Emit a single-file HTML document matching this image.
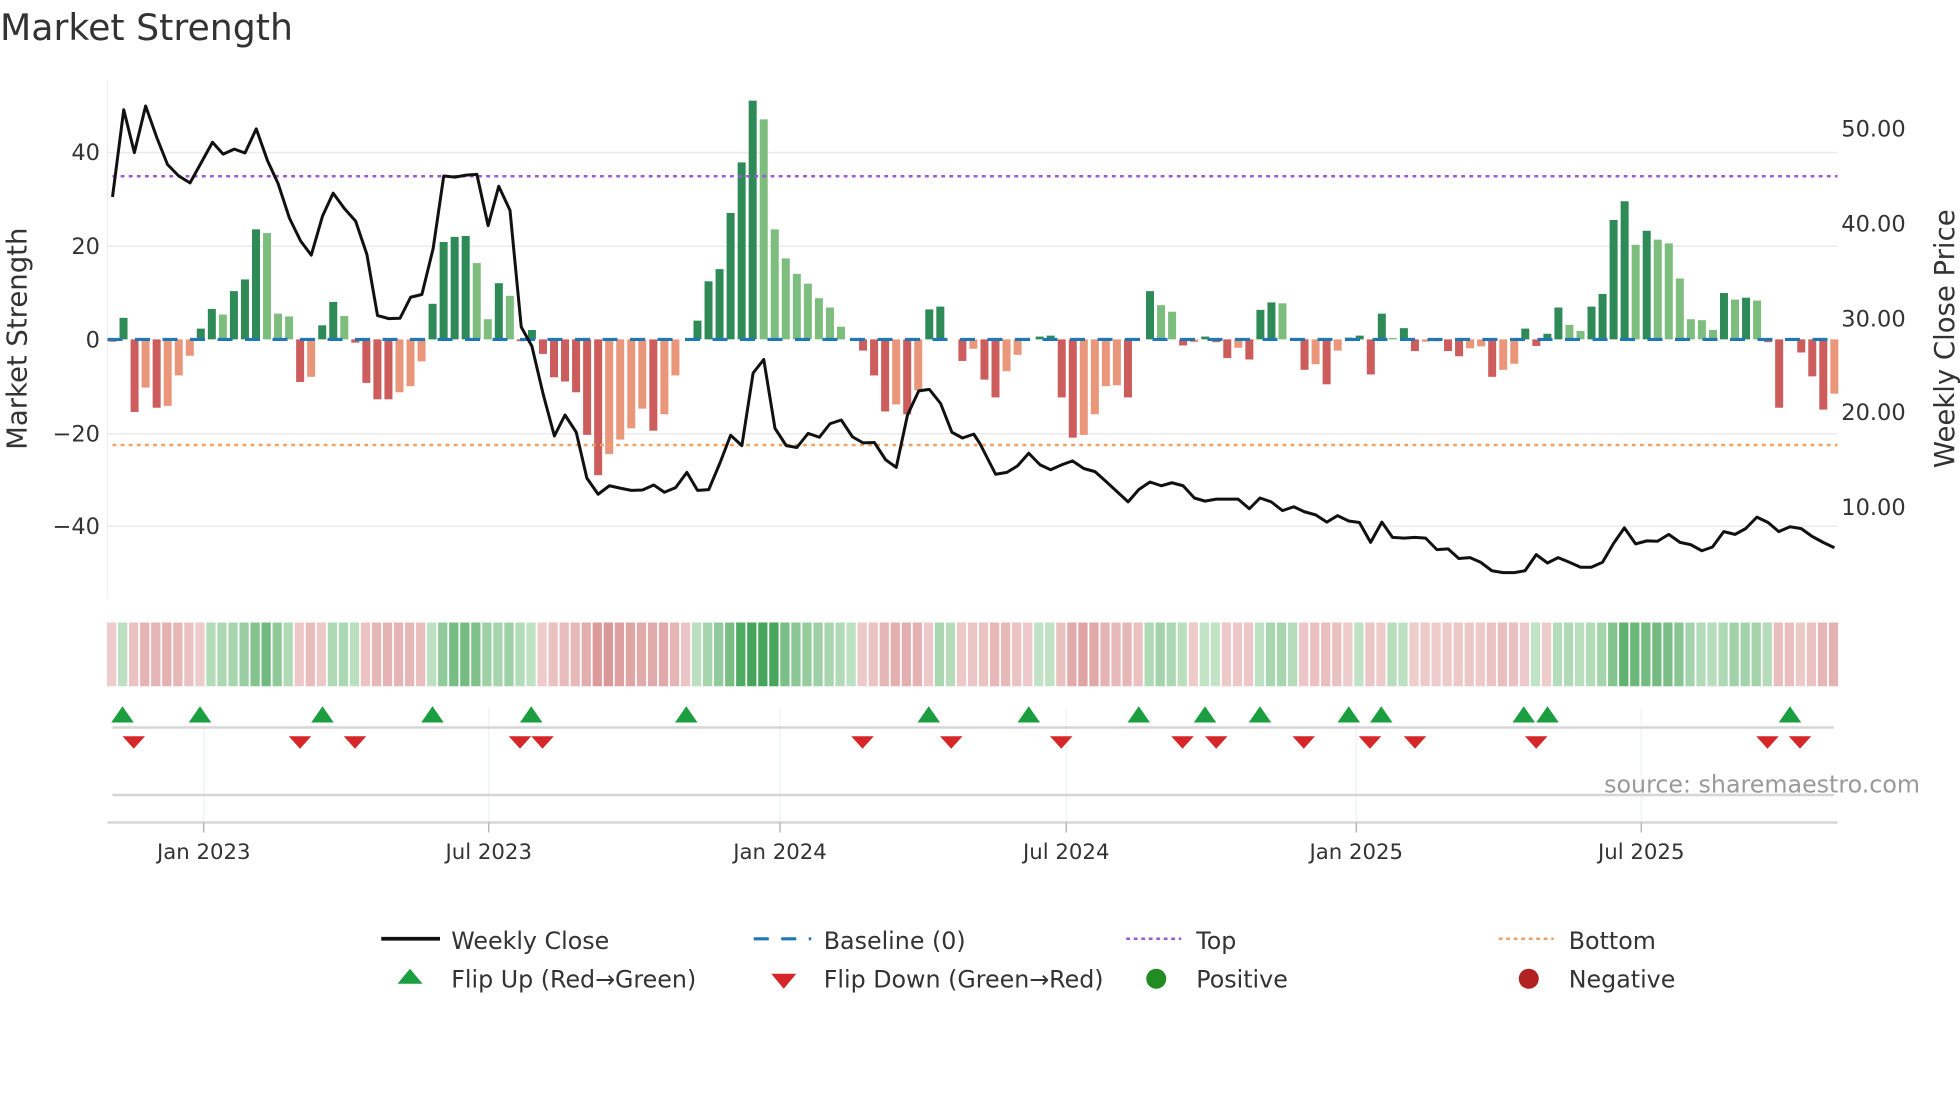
<!DOCTYPE html>
<html><head><meta charset="utf-8">
<style>
html,body{margin:0;padding:0;background:#fff;}
svg{display:block;font-family:"DejaVu Sans","Liberation Sans",sans-serif;}
</style></head>
<body>
<svg id="s" width="1960" height="1102" viewBox="0 0 1568 881.6" xmlns="http://www.w3.org/2000/svg">
<rect width="1568" height="882" fill="#fff"/>
<text x="0" y="32" font-size="29" fill="#333">Market Strength</text>
<g stroke="#ebebeb" stroke-width="1.2">
<line x1="86" x2="1470" y1="122" y2="122"/><line x1="86" x2="1470" y1="197" y2="197"/>
<line x1="86" x2="1470" y1="347" y2="347"/><line x1="86" x2="1470" y1="421" y2="421"/>
</g>
<line x1="86" x2="86" y1="65" y2="478" stroke="#eee" stroke-width="1"/>
<g font-size="18" fill="#333" text-anchor="end">
<text x="80" y="128">40</text><text x="80" y="203">20</text><text x="80" y="278">0</text>
<text x="80" y="353">−20</text><text x="80" y="427">−40</text>
</g>
<g font-size="18" fill="#333">
<text x="1473" y="109">50.00</text><text x="1473" y="185">40.00</text><text x="1473" y="261">30.00</text>
<text x="1473" y="336">20.00</text><text x="1473" y="412">10.00</text>
</g>
<text transform="translate(21,271) rotate(-90)" font-size="22" fill="#333" text-anchor="middle">Market Strength</text>
<text transform="translate(1563,271) rotate(-90)" font-size="22" fill="#333" text-anchor="middle">Weekly Close Price</text>
<g id="bars"></g>
<line x1="86" x2="1470" y1="271.5" y2="271.5" stroke="#1f77b4" stroke-width="2.5" stroke-dasharray="12 10"/>
<line x1="90" x2="1470" y1="141" y2="141" stroke="#9b59d6" stroke-width="2" stroke-dasharray="3 3.5"/>
<line x1="90" x2="1470" y1="356" y2="356" stroke="#f0a060" stroke-width="2" stroke-dasharray="3 3.5"/>
<polyline id="price" fill="none" stroke="#111" stroke-width="2.4" stroke-linejoin="round"/>
<g id="heat"></g>
<g stroke="#eef2f2" stroke-width="1">
<line x1="163" x2="163" y1="566" y2="658"/><line x1="391" x2="391" y1="566" y2="658"/>
<line x1="624" x2="624" y1="566" y2="658"/><line x1="853" x2="853" y1="566" y2="658"/>
<line x1="1085" x2="1085" y1="566" y2="658"/><line x1="1313" x2="1313" y1="566" y2="658"/>
</g>
<line x1="90" x2="1467" y1="582" y2="582" stroke="#d6d6d6" stroke-width="2"/>
<line x1="90" x2="1467" y1="636" y2="636" stroke="#d6d6d6" stroke-width="2"/>
<line x1="86" x2="1470" y1="658" y2="658" stroke="#d6d6d6" stroke-width="2"/>
<g stroke="#aaa" stroke-width="1">
<line x1="163" x2="163" y1="658" y2="666"/><line x1="391" x2="391" y1="658" y2="666"/>
<line x1="624" x2="624" y1="658" y2="666"/><line x1="853" x2="853" y1="658" y2="666"/>
<line x1="1085" x2="1085" y1="658" y2="666"/><line x1="1313" x2="1313" y1="658" y2="666"/>
</g>
<g font-size="17" fill="#333" text-anchor="middle">
<text x="163" y="687">Jan 2023</text><text x="391" y="687">Jul 2023</text><text x="624" y="687">Jan 2024</text>
<text x="853" y="687">Jul 2024</text><text x="1085" y="687">Jan 2025</text><text x="1313" y="687">Jul 2025</text>
</g>
<g id="marks"></g>
<text x="1536" y="634" font-size="19" fill="#999" text-anchor="end">source: sharemaestro.com</text>
<g font-size="19" fill="#333">
<line x1="305" x2="352" y1="751" y2="751" stroke="#111" stroke-width="3"/>
<text x="361" y="759">Weekly Close</text>
<line x1="603" x2="649" y1="751" y2="751" stroke="#1f77b4" stroke-width="2.5" stroke-dasharray="12 10"/>
<text x="659" y="759">Baseline (0)</text>
<line x1="901" x2="945" y1="751" y2="751" stroke="#9b59d6" stroke-width="2" stroke-dasharray="3 3"/>
<text x="957" y="759">Top</text>
<line x1="1199" x2="1243" y1="751" y2="751" stroke="#f0a060" stroke-width="2" stroke-dasharray="3 3"/>
<text x="1255" y="759">Bottom</text>
<polygon points="328,775 338,787 318,787" fill="#1a9e3f"/>
<text x="361" y="790">Flip Up (Red→Green)</text>
<polygon points="617,779 637,779 627,791" fill="#d62728"/>
<text x="659" y="790">Flip Down (Green→Red)</text>
<circle cx="925" cy="783" r="8" fill="#228b22"/>
<text x="957" y="790">Positive</text>
<circle cx="1223" cy="783" r="8" fill="#b22222"/>
<text x="1255" y="790">Negative</text>
</g>
</svg>
<script>
var NS="http://www.w3.org/2000/svg";
function el(t,a,p){var e=document.createElementNS(NS,t);for(var k in a)e.setAttribute(k,a[k]);p.appendChild(e);return e;}
var B=[[-0.5,'r'],[4.6,'d'],[-15.5,'r'],[-10.3,'o'],[-14.6,'r'],[-14.2,'o'],[-7.7,'o'],[-3.5,'o'],[2.3,'d'],[6.5,'d'],[5.3,'l'],[10.3,'d'],[12.8,'d'],[23.5,'d'],[22.7,'l'],[5.5,'l'],[4.9,'l'],[-9.1,'r'],[-8,'o'],[3,'d'],[8,'d'],[5,'l'],[-0.7,'r'],[-9.3,'r'],[-12.8,'r'],[-12.8,'r'],[-11.3,'o'],[-10,'o'],[-4.7,'o'],[7.6,'d'],[20.8,'d'],[21.9,'d'],[22.1,'d'],[16.3,'l'],[4.3,'l'],[12,'d'],[9.3,'l'],[-0.4,'r'],[2,'d'],[-3.1,'r'],[-8.1,'r'],[-9,'r'],[-11.3,'r'],[-20.4,'r'],[-29,'r'],[-24.5,'o'],[-21.4,'o'],[-19,'o'],[-14.8,'o'],[-19.5,'r'],[-16,'o'],[-7.7,'o'],[0,'d'],[4,'d'],[12.4,'d'],[15,'d'],[27,'d'],[37.8,'d'],[51,'d'],[47,'l'],[23.5,'l'],[17.3,'l'],[14,'l'],[11.9,'l'],[8.8,'l'],[6.8,'l'],[2.7,'l'],[0,'l'],[-2.4,'r'],[-7.7,'r'],[-15.4,'r'],[-13.9,'o'],[-16,'r'],[-10.9,'o'],[6.4,'d'],[7,'d'],[0,'d'],[-4.6,'r'],[-2,'o'],
[-8.6,'r'],[-12.4,'r'],[-6.8,'o'],[-3.3,'o'],[0,'d'],[0.6,'d'],[0.8,'d'],[-12.4,'r'],[-21,'r'],[-20.4,'o'],[-16,'o'],[-10,'o'],[-9.8,'o'],[-12.4,'r'],[0,'d'],[10.3,'d'],[7.3,'l'],[5.9,'l'],[-1.3,'r'],[-0.6,'o'],[0.6,'d'],[-0.6,'r'],[-4,'r'],[-1.8,'o'],[-4.3,'r'],[6.3,'d'],[7.9,'d'],[7.7,'l'],[0.1,'l'],[-6.5,'r'],[-5.3,'o'],[-9.6,'r'],[-2.4,'o'],[0.4,'l'],[0.8,'d'],[-7.5,'r'],[5.5,'d'],[0.3,'l'],[2.4,'d'],[-2.5,'r'],[-0.5,'o'],[-0.4,'r'],[-2.5,'r'],[-3.6,'r'],[-1.9,'o'],[-1.5,'o'],[-8,'r'],[-6.5,'o'],[-5.2,'o'],[2.3,'d'],[-1.4,'r'],[1.2,'d'],[6.8,'d'],[3.1,'l'],[1.8,'l'],[7,'d'],[9.7,'d'],[25.5,'d'],[29.5,'d'],[20.2,'l'],[23.2,'d'],[21.3,'l'],[20.5,'l'],[13,'l'],[4.3,'l'],[4.1,'l'],[2,'l'],[9.9,'d'],[8.5,'l'],[8.9,'d'],[8.3,'l'],[-0.6,'r'],[-14.6,'r'],[0,'r'],[-2.8,'r'],[-7.9,'r'],[-15,'r'],[-11.6,'o']];
var col={d:'#2e8b57',l:'#7dbd7d',r:'#cd5c5c',o:'#e9967a'};
var bars=document.getElementById('bars'),heat=document.getElementById('heat');
var z=271.5,u=3.745;
function mix(a,b,t){return 'rgb('+[0,1,2].map(function(i){return Math.round(a[i]+(b[i]-a[i])*t)}).join(',')+')';}
for(var i=0;i<B.length;i++){
  var x=90+i*8.83,v=B[i][0];
  if(Math.abs(v)>0.05){var h=Math.abs(v)*u;el('rect',{x:x-3.2,y:v>0?z-h:z,width:6.4,height:h,fill:col[B[i][1]]},bars);}
  var s=0,n=0;for(var j=Math.max(0,i-1);j<=i;j++){s+=B[j][0];n++;}
  s=s/n;var pos=(s>=0);var t=Math.min(1,Math.abs(s)/35);t=0.2+0.8*t;
  var c=pos?mix([225,242,225],[70,165,90],t):mix([245,222,222],[212,135,135],t);
  el('rect',{x:x-4.4,y:498,width:7.4,height:51,fill:c},heat);
}
var P1=[[180,515],[198,287],[215,399],[233,277],[251,360],[268,430],[286,460],[304,478],[322,425],[340,372],[357,403],[375,390],[392,400],[410,337],[428,420],[445,480],[463,570],[481,630],[498,667],[516,565],[533,505],[551,545],[569,578],[587,665],[604,825],[622,833],[640,832],[657,777],[675,770],[693,650],[710,460],[728,463],[746,458],[763,456],[781,590],[798,487],[816,550],[834,855],[851,905],[869,1030],[887,1140],[904,1085],[922,1130],[939,1250],[957,1292],[975,1270],[992,1276],[1010,1282],[1028,1281],[1046,1268],[1063,1287],[1081,1275],[1099,1235],[1116,1282],[1134,1280],[1152,1210],[1169,1138],[1187,1165],[1205,975],[1222,940],[1240,1120],[1258,1165],[1275,1170],[1293,1133],[1311,1143],[1328,1108],[1346,1098],[1364,1142],[1381,1158],[1399,1157],[1417,1202],[1434,1222],[1452,1085],[1470,1022],[1487,1018],[1505,1055],[1523,1130],[1540,1145],[1558,1135]];
var P2=[[0,1160],[25,1240],[43,1235],[60,1218],[78,1185],[96,1215],[113,1228],[131,1215],[148,1205],[166,1225],[184,1233],[201,1258],[219,1285],[237,1312],[254,1280],[272,1260],[290,1270],[307,1262],[325,1270],[343,1302],[360,1310],[378,1305],[396,1305],[413,1305],[431,1330],[448,1302],[466,1312],[484,1335],[502,1325],[519,1338],[537,1346],[555,1365],[572,1348],[590,1362],[607,1366],[625,1418],[643,1365],[660,1405],[678,1407],[696,1405],[713,1407],[731,1437],[749,1435],[766,1460],[784,1458],[801,1470],[819,1492],[837,1497],[855,1497],[872,1492],[890,1450],[908,1472],[925,1458],[943,1470],[961,1483],[978,1483],[996,1470],[1014,1420],[1031,1380],[1049,1422],[1067,1414],[1084,1415],[1102,1397],[1120,1418],[1137,1424],[1155,1440],[1172,1430],[1190,1390],[1208,1397],[1225,1382],[1243,1352],[1261,1366],[1278,1390],[1296,1377],[1314,1382],[1331,1402],[1349,1418],[1367,1432]];
var pts=P1.map(function(p){return (p[0]*0.5).toFixed(1)+','+(p[1]*0.306).toFixed(1)}).concat(P2.map(function(p){return (p[0]*0.5+784).toFixed(1)+','+(p[1]*0.306).toFixed(1)}));
document.getElementById('price').setAttribute('points',pts.join(' '));
var marks=document.getElementById('marks');
[98,160,258,346,425,549,743,823,911,964,1008,1079,1105,1219,1238,1432].forEach(function(x){el('polygon',{points:(x)+',565 '+(x+9)+',578 '+(x-9)+',578',fill:'#1a9e3f'},marks);});
[107,240,284,416,434,690,761,849,946,973,1043,1096,1132,1229,1414,1440].forEach(function(x){el('polygon',{points:(x-9)+',589 '+(x+9)+',589 '+x+',599',fill:'#d62728'},marks);});
</script>
</body></html>
